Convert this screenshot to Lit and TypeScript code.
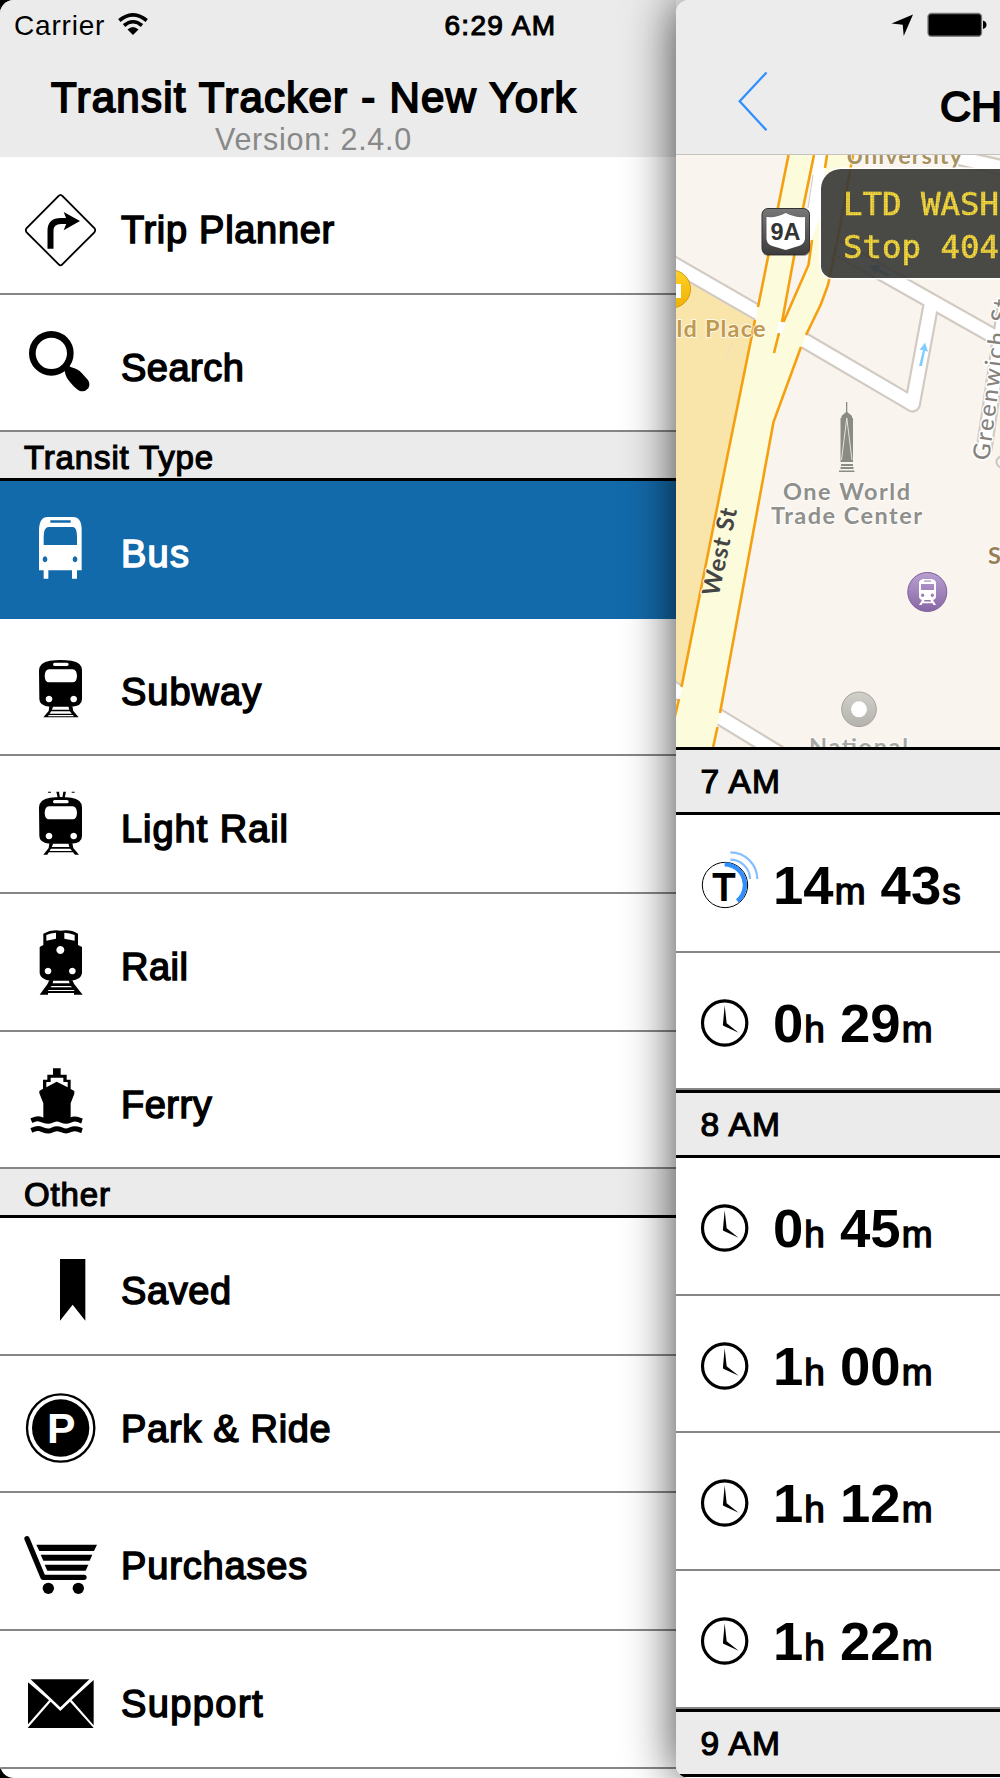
import { css, html, svg, LitElement } from 'lit';
import { customElement, property } from 'lit/decorators.js';
import { classMap } from 'lit/directives/class-map.js';

// Icon artwork is drawn at 3x; each entry holds the viewBox top and the shapes.
const ICONS: Record<string, { top: number; art: unknown }> = {
    trip: {
        top: 471,
        art: svg`
            <path d="M176 588q5.500-7 11 0L283 684q5 6.500 0 13L187 793q-5.500 6-11 0L80 697q-5-6.500 0-13Z" fill="none" stroke="currentColor" stroke-width="5.500"/>
            <path d="M151.500 746V692Q151.500 663 183 663H208" fill="none" stroke="currentColor" stroke-width="18"/>
            <path d="M191 636 240 663 191 691 202 664Z"/>`,
    },
    search: {
        top: -16,
        art: svg`
            <circle cx="154" cy="159" r="57" fill="none" stroke="currentColor" stroke-width="20"/>
            <path d="M190 206 203 194Q208 198 214 201Q234 206 245 218L264 239Q272 252 265 264Q255 276 240 272Q229 268 213 249Q197 232 195 216Q194 210 190 206Z"/>`,
    },
    bus: {
        top: 543,
        art: svg`
            <path fill-rule="evenodd" d="M117 811V690Q118 651 143 651H219Q245 651 245 690V811H231V836H216V811H145V836H131V811ZM151 661V668H212V661ZM131 735H231V712Q231 681 219 681H144Q131 683 131 712ZM135 769a7 9 0 1 0 .1 0ZM225 769a7 9 0 1 0 .1 0Z"/>`,
    },
    subway: {
        top: -4,
        art: svg`
            <path fill-rule="evenodd" d="M117 150Q118 126 150 121Q182 117 214 121Q246 126 246 150V236Q246 258 214 259H150Q118 257 118 236ZM164 127Q159 127 159 132Q159 137 164 137H201Q206 137 206 132Q206 127 201 127ZM147 147Q135 147 134 167Q135 186 147 186H218Q230 186 231 167Q230 147 218 147ZM147 226a10 10 0 1 0 .1 0ZM221 226a10 10 0 1 0 .1 0Z"/>
            <path d="M148 258H160L154 272 142 291H130L146 272ZM205 258H217L220 272 236 291H224L209 272ZM150 268H215V273H150ZM142 280H225V284H142ZM136 288H230V291H136Z"/>`,
    },
    lightrail: {
        top: 409,
        art: svg`
            <path d="M144 516H153V519H144ZM215 516H224V519H215ZM169 516H177L180 534H173ZM190 516H198L194 534H187Z"/>
            <path fill-rule="evenodd" d="M117 563Q118 539 150 534Q182 530 214 534Q246 539 246 563V649Q246 671 214 672H150Q118 670 118 649ZM164 541Q159 541 159 546Q159 551 164 551H201Q206 551 206 546Q206 541 201 541ZM147 560Q135 560 134 580Q135 599 147 599H218Q230 599 231 580Q230 560 218 560ZM147 639a10 10 0 1 0 .1 0ZM221 639a10 10 0 1 0 .1 0Z"/>
            <path d="M148 671H160L154 685 142 705H130L146 685ZM205 671H217L220 685 237 705H225L209 685ZM150 682H215V687H150ZM142 694H225V698H142Z"/>`,
    },
    rail: {
        top: -19,
        art: svg`
            <path fill-rule="evenodd" d="M130 134V100Q155 86 182 91Q212 86 234 100V134L246 140V219Q243 239 214 241H150Q122 238 119 219V140ZM139 104V121L168 115V97Q152 98 139 104ZM193 97V115L224 121V104Q210 98 193 97ZM181 137a12 12 0 1 0 .1 0ZM144 202a10 10 0 1 0 .1 0ZM217 202a10 10 0 1 0 .1 0Z"/>
            <path d="M148 240H160L158 249H209L206 240H217L223 252 248 283H222V278H144V283H119L142 252ZM155 257 151 261H216L212 257ZM146 269 143 272H224L221 269Z" fill-rule="evenodd"/>`,
    },
    ferry: {
        top: 394,
        art: svg`
            <path fill-rule="evenodd" d="M159 503H182V522H200V537H212V565L223 571V579L212 608V658H130V608L118 578V571L129 564V537H142V522H159ZM152 531V544H139V560L170 543 203 560V544H190V531Z"/>
            <path d="M94 660C104 656 110 653 118 655S136 662 145 662 160 655 171 655 187 662 198 662 213 655 224 655 236 658 246 661M94 689C104 685 110 682 118 684S136 691 145 691 160 684 171 684 187 691 198 691 213 684 224 684 236 687 246 690" fill="none" stroke="currentColor" stroke-width="15"/>`,
    },
    saved: {
        top: -6,
        art: svg`<path d="M180 117H256V302L218 254 180 302Z"/>`,
    },
    parking: {
        top: 407,
        art: svg`
            <circle cx="182" cy="623" r="101" fill="none" stroke="currentColor" stroke-width="7"/>
            <circle cx="182" cy="623" r="86"/>
            <text class="p" x="141" y="668">P</text>`,
    },
    cart: {
        top: 40,
        art: svg`
            <path d="M81 177 129 293H252" fill="none" stroke="currentColor" stroke-width="16" stroke-linecap="round" stroke-linejoin="round"/>
            <path d="M109 195H291L282 214H118ZM122 225H277L269 243H130ZM134 255H265L257 273H142Z"/>
            <circle cx="145" cy="326" r="17"/><circle cx="235" cy="326" r="17"/>`,
    },
    mail: {
        top: 452,
        art: svg`
            <path d="M92 597H268L181 681ZM84 606 147 660 84 732ZM281 599V735L215 659ZM83 743 152 664 181 692 210 664 281 743Z"/>`,
    },
};

@customElement('transit-icon')
export class TransitIcon extends LitElement {
    static styles = css`
        :host {
            flex: none;
            display: block;
            width: 121px;
            height: 137.6px;
        }
        svg {
            display: block;
            width: 121px;
            height: 137.6px;
            fill: currentColor;
        }
        .p {
            font: bold 128px 'Liberation Sans', sans-serif;
            fill: #fff;
        }
    `;

    @property() name = 'bus';

    render() {
        const icon = ICONS[this.name];
        return html`<svg viewBox="0 ${icon.top} 363 412.8">${icon.art}</svg>`;
    }
}

@customElement('menu-row')
export class MenuRow extends LitElement {
    static styles = css`
        :host {
            display: block;
        }
        .row {
            box-sizing: border-box;
            height: 137.6px;
            display: flex;
            background: #fff;
            border-bottom: 2px solid #868686;
            overflow: hidden;
        }
        .row.selected {
            background: #136aaa;
            border-color: #136aaa;
            color: #fff;
        }
        .label {
            padding-top: 51px;
            font-size: 38px;
            line-height: 44px;
            white-space: nowrap;
            -webkit-text-stroke: 1.5px currentColor;
        }
    `;

    @property() icon = '';
    @property() label = '';
    @property({ type: Number }) spacing = 0.5;
    @property({ type: Boolean }) selected = false;

    render() {
        return html`
            <div class=${classMap({ row: true, selected: this.selected })}>
                <transit-icon name=${this.icon}></transit-icon>
                <span class="label" style="letter-spacing: ${this.spacing}px">${this.label}</span>
            </div>
        `;
    }
}

@customElement('time-row')
export class TimeRow extends LitElement {
    static styles = css`
        :host {
            display: block;
        }
        .row {
            box-sizing: border-box;
            height: 137.6px;
            display: flex;
            background: #fff;
            border-bottom: 2px solid #868686;
            overflow: hidden;
        }
        svg {
            flex: none;
            width: 97px;
            height: 137.6px;
        }
        .t {
            font: 110px 'Liberation Sans', sans-serif;
            stroke: #000;
            stroke-width: 6px;
        }
        .time {
            padding-top: 40px;
            line-height: 62px;
            font-size: 54.5px;
            font-weight: bold;
            white-space: nowrap;
        }
        small {
            font-size: 37px;
            font-weight: normal;
            padding-left: 1px;
            -webkit-text-stroke: 1.4px currentColor;
        }
    `;

    @property({ type: Array }) parts: string[] = [];
    @property({ type: Boolean }) live = false;

    render() {
        const [a, au, b, bu] = this.parts;
        return html`
            <div class="row">
                ${this.live ? html`
                    <svg viewBox="48 -15 291 412.8" fill="none">
                        <circle cx="195" cy="195" r="68" stroke="#000" stroke-width="3"/>
                        <path d="M194 133A62 62 0 0 1 232 243" stroke="#2f8fff" stroke-width="13"/>
                        <path d="M211 119A59 59 0 0 1 270 177M211 97A81 81 0 0 1 292 177" stroke="#86bfff" stroke-width="6.500"/>
                        <text class="t" x="158.500" y="239" fill="#000">T</text>
                    </svg>` : html`
                    <svg viewBox="48 397 291 412.8">
                        <circle cx="194" cy="607" r="66.500" fill="#fff" stroke="#000" stroke-width="9.500"/>
                        <path d="M194 554 200 608 236 636 190 615Q188 613 189 609Z"/>
                    </svg>`}
                <span class="time">${a}<small>${au}</small> ${b}<small>${bu}</small></span>
            </div>
        `;
    }
}

@customElement('station-map')
export class StationMap extends LitElement {
    static styles = css`
        :host {
            display: block;
            position: relative;
            height: 592px;
            overflow: hidden;
            background: #f9f4ee;
        }
        svg {
            display: block;
            width: 324px;
            height: 592px;
        }
        text {
            font-family: Lato, sans-serif;
            font-size: 23.5px;
            font-weight: bold;
        }
        .halo {
            paint-order: stroke;
            stroke: #fff;
            stroke-width: 2px;
            stroke-opacity: 0.8;
        }
        .street {
            font-weight: 500;
            paint-order: stroke;
            stroke-width: 3px;
        }
        .avenue {
            font-size: 24px;
            paint-order: stroke;
            stroke-width: 2px;
        }
        .shield {
            font-family: 'Liberation Sans', sans-serif;
            font-size: 23px;
        }
        .casing {
            fill: none;
            stroke: #d2cbc3;
            stroke-width: 17px;
            stroke-linejoin: round;
        }
        .road {
            fill: none;
            stroke: #fff;
            stroke-width: 12.5px;
            stroke-linejoin: round;
        }
        .edge {
            fill: none;
            stroke: #f5a010;
            stroke-width: 2.6px;
        }
        .sign {
            position: absolute;
            left: 145px;
            top: 14px;
            width: 300px;
            height: 109px;
            box-sizing: border-box;
            padding: 14px 0 0 22px;
            border-radius: 20px 20px 12px 12px;
            box-shadow: 0 0 0 1.5px #fff;
            background: rgba(58, 57, 55, 0.92);
        }
        .led {
            font: 32.4px 'DejaVu Sans Mono', monospace;
            line-height: 43.3px;
            white-space: pre;
            color: #ffe03a;
            -webkit-text-stroke: 0.6px #ffe03a;
            -webkit-mask-image: radial-gradient(circle, #000 50%, rgba(0, 0, 0, 0.5) 80%);
            -webkit-mask-size: 2.5px 2.5px;
        }
    `;

    render() {
        return html`
            <svg viewBox="676 155 324 592">
                <defs>
                    <linearGradient id="purple" x2="0" y2="1">
                        <stop stop-color="#b9a0d0"/><stop offset="1" stop-color="#8766a5"/>
                    </linearGradient>
                    <linearGradient id="ring" x2="0" y2="1">
                        <stop stop-color="#d2d0cb"/><stop offset="1" stop-color="#b4b2ad"/>
                    </linearGradient>
                    <linearGradient id="plate" x2="0" y2="1">
                        <stop stop-color="#777"/><stop offset="1" stop-color="#3d3d3d"/>
                    </linearGradient>
                    <linearGradient id="gold" x2="0" y2="1">
                        <stop stop-color="#ffd22a"/><stop offset="1" stop-color="#f0b000"/>
                    </linearGradient>
                </defs>

                <path d="M676 272 760 320 682 690H676Z" fill="#f9e5aa"/>
                <path d="M733 342 725 361" stroke="#e9dfc8" fill="none"/>

                <path class="casing" d="M670 262 760 314 800 338 912.500 404 932 299M832 245 1004 342M670 687 790 760M960 158 1004 168M984 450 1006 300"/>
                <path class="road" d="M670 262 760 314 800 338 912.500 404 932 299M832 245 1004 342M670 687 790 760M960 158 1004 168M984 450 1006 300"/>

                <path d="M814 155H828L826 200 806 262 808 210Z" fill="#fff"/>
                <path d="M813 175 808 208" stroke="#d2cbc3" fill="none"/>
                <path d="M788 155H814L782 322 774 353 784 322 808 265 811 240 819 220 827 155H853L837 242 828 285 821 304 806 335 773.500 422 767 460 720 713 712 750H670L682 687 726 463 758 307Z" fill="#fcfbdc"/>
                <path d="M779 321 786 322 781 335 776 333Z" fill="#fff"/>
                <path class="edge" d="M788.500 155 758 307M755 320 726 463 681.500 687M679 699 675 716"/>
                <path class="edge" d="M814 155 803 208 782 322M779 333 774 353M827 155 825 168M812 240 808.500 265 783.500 322"/>
                <path class="edge" d="M853 155 837 242 828 285 821 304 806 335M801 347 773.500 422 766.500 460 720 713M717.500 727 712.500 750"/>

                <path d="M919 366 923 350 919.500 350 925 342.500 928 351.500 925 351 922 366Z" fill="#80ceff"/>
                <path d="M888 277 877 271 876 274 869 266 880 265 879 268 890 275Z" fill="#5ac0ff"/>

                <g fill="#8b8b86">
                    <path d="M846 402H847.300V412L852 416V418H853V462H840.500V418H841.500V416L846 412Z"/>
                    <path d="M841 464H853V466H841ZM840.500 467H853.500V469H840.500ZM839 470.500H854.500V472H839Z"/>
                    <path d="M841.500 460 846.800 418 852 460" stroke="#e4e2dc" fill="none"/>
                </g>

                <circle cx="671.500" cy="289" r="19" fill="url(#gold)" stroke="#cf9a18"/>
                <path d="M670 284H681V298H670Z" fill="#fff"/>

                <rect x="762" y="209" width="48" height="47" rx="6" fill="#000" opacity=".35"/>
                <rect x="762" y="208.500" width="47.500" height="46" rx="6" fill="url(#plate)" stroke="#333"/>
                <path d="M766.500 217Q777 218 785.700 213Q795 218 805 217V239Q804 245 797 246.500L785.700 250 774 246.500Q767 245 766.500 239Z" fill="#fff"/>
                <text class="shield" x="770.500" y="240" textLength="30" lengthAdjust="spacingAndGlyphs" fill="#333">9A</text>

                <text class="halo" x="846" y="164" textLength="116" fill="#a8925f">University</text>
                <text class="halo" x="676.500" y="337" textLength="89" fill="#be994f">ld Place</text>
                <text class="halo" x="783" y="499.500" textLength="127" fill="#8f8f8b">One World</text>
                <text class="halo" x="771" y="523.500" textLength="151" fill="#8f8f8b">Trade Center</text>
                <text class="halo" x="988" y="564" fill="#9a7f55">S</text>
                <text class="halo" x="809" y="754.500" textLength="99" fill="#a6a6a2">National</text>
                <text class="avenue" transform="translate(718.500 597) rotate(-78)" textLength="89" fill="#444" stroke="#fcfbdc">West St</text>
                <text class="street" transform="translate(989 461) rotate(-82.500)" textLength="162" fill="#85827e" stroke="#fff">Greenwich St</text>
                <circle cx="1002" cy="462" r="5.500" fill="none" stroke="#c9c5bf" stroke-width="2"/>

                <circle cx="927.300" cy="592" r="19.500" fill="url(#purple)" stroke="#7d5f9c"/>
                <path fill="#fff" fill-rule="evenodd" d="M923 579H932Q936 580 936 583V596Q936 600 932 600H923Q919 600 919 596V583Q919 580 923 579ZM924 580.500V581.800H931V580.500ZM921 584V590H934V584ZM922.600 593.500a1.700 1.700 0 1 0 .1 0ZM932.300 593.500a1.700 1.700 0 1 0 .1 0ZM922 600H924.500L924 601.500H931L930.500 600H933L936 605H933.500L932.500 603.300H922.500L921.500 605H919Z"/>
                <circle cx="859" cy="709.300" r="17.300" fill="url(#ring)" stroke="#a5a29d"/>
                <circle cx="859" cy="709.300" r="8" fill="#fff"/>
            </svg>
            <div class="sign">
                <div class="led">LTD WASH</div>
                <div class="led">Stop 404</div>
            </div>
        `;
    }
}

@customElement('app-root')
export class AppRoot extends LitElement {
    static styles = css`
        :host {
            display: block;
            position: relative;
            width: 1000px;
            height: 1778px;
            overflow: hidden;
            background: #000;
            color: #000;
            font-family: 'Liberation Sans', Arial, sans-serif;
        }
        .screen {
            display: grid;
            grid-template-columns: 676px 324px;
            height: 1778px;
            border-radius: 14px 0 0 14px;
            overflow: hidden;
            background: #fff;
        }
        .menu {
            min-width: 0;
        }
        .menu header {
            height: 157px;
            background: #ebebeb;
        }
        .status {
            display: flex;
            align-items: center;
            height: 51px;
            padding-left: 14px;
            font-size: 28px;
            white-space: nowrap;
        }
        .carrier {
            width: 104px;
            letter-spacing: 0.8px;
        }
        .wifi {
            width: 30px;
            height: 22px;
            margin-top: -4px;
        }
        .clock {
            margin-left: 296.5px;
            letter-spacing: 1.3px;
            -webkit-text-stroke: 1.1px currentColor;
        }
        h1 {
            margin: 22.5px 0 0;
            padding-right: 48px;
            text-align: center;
            font-size: 42px;
            line-height: 48px;
            font-weight: normal;
            letter-spacing: 1.25px;
            white-space: nowrap;
            -webkit-text-stroke: 1.8px currentColor;
        }
        .version {
            padding-right: 49px;
            text-align: center;
            font-size: 30.5px;
            line-height: 34px;
            letter-spacing: 0.75px;
            color: #888;
        }
        .section {
            box-sizing: border-box;
            height: 49px;
            padding: 5px 0 0 24px;
            border-bottom: 3px solid #000;
            background: #ebebeb;
            font-size: 33px;
            line-height: 41px;
            letter-spacing: 0.85px;
            white-space: nowrap;
            -webkit-text-stroke: 1.2px currentColor;
        }
        .detail {
            position: relative;
            z-index: 1;
            height: 1778px;
            border-radius: 13px 0 0 13px;
            background: #fff;
            box-shadow: 0 0 50px rgba(0, 0, 0, 0.75);
        }
        .clip {
            height: 1778px;
            border-radius: 13px 0 0 13px;
            overflow: hidden;
        }
        .detail header {
            box-sizing: border-box;
            height: 155px;
            border-bottom: 1px solid #c6c3bf;
            background: #ececec;
        }
        .bar {
            display: block;
            width: 324px;
            height: 154px;
        }
        .bar text {
            font-size: 43px;
            stroke: #000;
            stroke-width: 1.9px;
        }
        .hour {
            box-sizing: border-box;
            height: 68px;
            padding-left: 24.5px;
            border-top: 3px solid #000;
            border-bottom: 3px solid #000;
            background: #ebebeb;
            font-size: 33.5px;
            line-height: 63px;
            letter-spacing: 1px;
            -webkit-text-stroke: 1.2px currentColor;
        }
    `;

    render() {
        return html`
            <div class="screen">
                <nav class="menu">
                    <header>
                        <div class="status">
                            <span class="carrier">Carrier</span>
                            <svg class="wifi" viewBox="0 0 30 22" fill="none" stroke="#000" stroke-width="3.600">
                                <path d="M1.300 7.500Q15-3.800 28.700 7.500M6 12.500Q15 5 24 12.500"/>
                                <path d="M9.500 16.500Q15 11.500 20.500 16.500L15 22Z" fill="#000" stroke="none"/>
                            </svg>
                            <span class="clock">6:29 AM</span>
                        </div>
                        <h1>Transit Tracker - New York</h1>
                        <div class="version">Version: 2.4.0</div>
                    </header>
                    <menu-row icon="trip" label="Trip Planner" spacing="0.7"></menu-row>
                    <menu-row icon="search" label="Search"></menu-row>
                    <div class="section">Transit Type</div>
                    <menu-row icon="bus" label="Bus" spacing="1.2" selected></menu-row>
                    <menu-row icon="subway" label="Subway" spacing="1"></menu-row>
                    <menu-row icon="lightrail" label="Light Rail" spacing="0.95"></menu-row>
                    <menu-row icon="rail" label="Rail"></menu-row>
                    <menu-row icon="ferry" label="Ferry"></menu-row>
                    <div class="section">Other</div>
                    <menu-row icon="saved" label="Saved" spacing="0.6"></menu-row>
                    <menu-row icon="parking" label="Park &amp; Ride" spacing="0.7"></menu-row>
                    <menu-row icon="cart" label="Purchases" spacing="0.85"></menu-row>
                    <menu-row icon="mail" label="Support" spacing="1.4"></menu-row>
                </nav>
                <main class="detail">
                    <div class="clip">
                        <header>
                            <svg class="bar" viewBox="676 0 324 154">
                                <path d="M891.500 23.500 913 14.500 903.700 36 902.700 24.700Z"/>
                                <rect x="928" y="13.500" width="53.500" height="22.700" rx="3.500" stroke="#777" stroke-width="1.300"/>
                                <path d="M983 20.500Q986.500 21.500 986.500 24.700T983 29Z"/>
                                <path d="M766.500 72.500 739.700 101.300 766.500 130.300" fill="none" stroke="#2f8fff" stroke-width="2.300"/>
                                <text x="940" y="120.700">CH</text>
                            </svg>
                        </header>
                        <station-map></station-map>
                        <div class="hour">7 AM</div>
                        <time-row live .parts=${['14', 'm', '43', 's']}></time-row>
                        <time-row .parts=${['0', 'h', '29', 'm']}></time-row>
                        <div class="hour">8 AM</div>
                        <time-row .parts=${['0', 'h', '45', 'm']}></time-row>
                        <time-row .parts=${['1', 'h', '00', 'm']}></time-row>
                        <time-row .parts=${['1', 'h', '12', 'm']}></time-row>
                        <time-row .parts=${['1', 'h', '22', 'm']}></time-row>
                        <div class="hour">9 AM</div>
                    </div>
                </main>
            </div>
        `;
    }
}
